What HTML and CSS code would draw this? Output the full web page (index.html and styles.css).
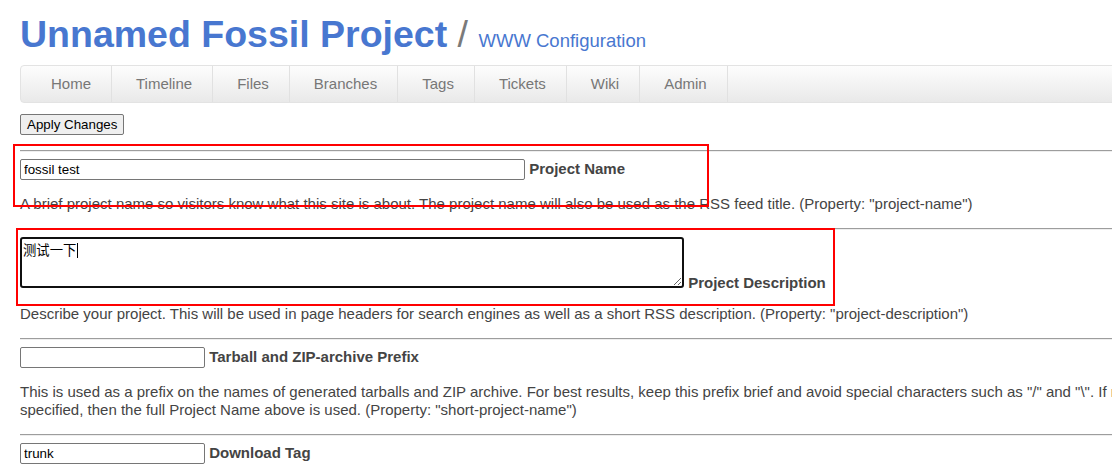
FILE: index.html
```html
<!DOCTYPE html>
<html lang="en">
<head>
<meta charset="utf-8">
<title>WWW Configuration</title>
<link rel="stylesheet" href="styles.css">
</head>
<body>
<div class="page">
  <div class="header"><span class="title">Unnamed Fossil Project</span> <span class="slash">/</span> <span class="subtitle">WWW Configuration</span></div>
  <nav class="mainmenu">
    <a class="menu-item first">Home</a><a class="menu-item">Timeline</a><a class="menu-item">Files</a><a class="menu-item">Branches</a><a class="menu-item">Tags</a><a class="menu-item">Tickets</a><a class="menu-item">Wiki</a><a class="menu-item">Admin</a>
  </nav>
  <form class="setup">
    <div class="apply"><button type="button" class="btn">Apply Changes</button></div>
    <hr class="rule">
    <div class="field"><input class="text-in wide" type="text" value="fossil test"> <b class="label">Project Name</b></div>
    <p class="help">A brief project name so visitors know what this site is about. The project name will also be used as the RSS feed title. (Property: "project-name")</p>
    <hr class="rule">
    <div class="field field-area"><textarea class="area" rows="2" cols="80">测试一下</textarea> <b class="label">Project Description</b></div>
    <p class="help">Describe your project. This will be used in page headers for search engines as well as a short RSS description. (Property: "project-description")</p>
    <hr class="rule">
    <div class="field"><input class="text-in short" type="text" value=""> <b class="label">Tarball and ZIP-archive Prefix</b></div>
    <p class="help">This is used as a prefix on the names of generated tarballs and ZIP archive. For best results, keep this prefix brief and avoid special characters such as "/" and "\". If not specified, then the full Project Name above is used. (Property: "short-project-name")</p>
    <hr class="rule">
    <div class="field"><input class="text-in short" type="text" value="trunk"> <b class="label">Download Tag</b></div>
    <p class="help">The download page is for this check-in or tag. (Property: "download-tag")</p>
  </form>
  <span class="caret"></span>
  <div class="mark mark-name"></div>
  <div class="mark mark-desc"></div>
</div>
</body>
</html>
```

FILE: styles.css
```css
html {
  overflow: hidden;
  background: #fff;
}

body {
  margin: 0;
  font-family: "Liberation Sans", Arial, sans-serif;
  font-size: 15px;
  line-height: 18px;
  color: #444;
}

.page {
  position: relative;
  width: 1150px;
  padding-left: 20px;
}

.header {
  padding-top: 12px;
  height: 44px;
  font-size: 37.5px;
  line-height: 44px;
  white-space: nowrap;
}

.title {
  font-weight: bold;
  color: #4877d0;
}

.slash {
  color: #7a7a7a;
}

.subtitle {
  font-size: 18.5px;
  line-height: 20px;
  color: #4877d0;
}

.mainmenu {
  margin-top: 9px;
  display: flex;
  height: 36px;
  padding-left: 6px;
  border: 1px solid #e3e3e3;
  border-radius: 4px;
  background: linear-gradient(#fdfdfd, #e9e9e9);
}

.menu-item {
  display: block;
  padding: 0 20px 0 24px;
  line-height: 36px;
  color: #777;
  border-right: 1px solid #e1e1e1;
  white-space: nowrap;
}

.setup {
  margin: 0;
}

.apply {
  margin-top: 11px;
  height: 21px;
}

.btn {
  height: 21px;
  margin: 0;
  padding: 0 6px;
  font-family: "Liberation Sans", Arial, sans-serif;
  font-size: 13.33px;
  color: #000;
  background: #efefef;
  border: 1px solid #767676;
  border-radius: 2px;
  vertical-align: top;
}

.rule {
  margin: 15px 0 7px;
  height: 0;
  border: 0;
  border-top: 1px solid #9d9d9d;
  border-bottom: 1px solid #eeeeee;
}

.help + .rule {
  margin-top: 0;
}

.field {
  white-space: nowrap;
}

.field-area {
  margin-bottom: -2px;
}

.text-in {
  box-sizing: border-box;
  height: 21px;
  margin: 0;
  padding: 0 3px;
  font-family: "Liberation Sans", Arial, sans-serif;
  font-size: 13.33px;
  color: #000;
  border: 1px solid #767676;
  border-radius: 2px;
  background: #fff;
}

.wide {
  width: 505px;
}

.short {
  width: 185px;
}

.area {
  box-sizing: border-box;
  width: 664px;
  height: 51px;
  margin: 0;
  padding: 3px 1px;
  font-family: "Noto Sans CJK SC", "Liberation Sans", sans-serif;
  font-size: 13.33px;
  line-height: 15px;
  color: #000;
  border: 2px solid #101010;
  border-radius: 3px;
  vertical-align: baseline;
}

.caret {
  position: absolute;
  left: 77px;
  top: 243px;
  width: 1px;
  height: 15px;
  background: #000;
}

.label {
  font-weight: bold;
  color: #444;
}

.help {
  margin: 15px 0;
}

.mark {
  position: absolute;
  border: 2px solid #ff0000;
  pointer-events: none;
}

.mark-name {
  left: 13px;
  top: 144px;
  width: 692px;
  height: 59px;
}

.mark-desc {
  left: 16px;
  top: 228px;
  width: 815px;
  height: 74px;
}
```
